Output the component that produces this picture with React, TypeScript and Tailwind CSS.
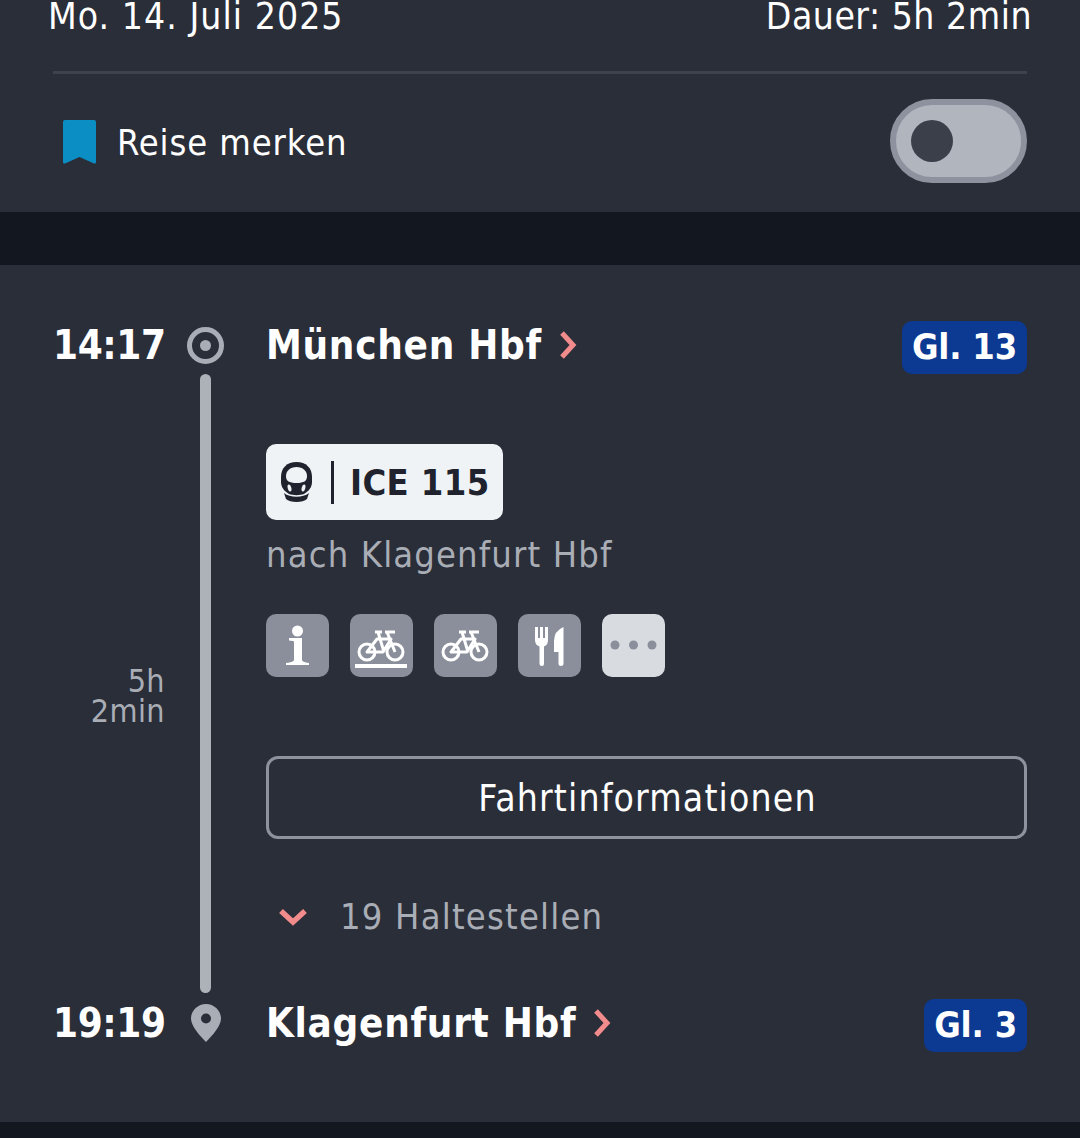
import React from "react";

function Bike() {
  return (
    <g fill="none" stroke="#fff" strokeWidth={3} strokeLinejoin="round">
      <circle cx={17} cy={38} r={8} />
      <circle cx={45} cy={38} r={8} />
      <path d="M17 38 L27 25 L41 25 L33 38 Z M25 18 H32 M28 18 L34 38 M35 18 H37 L45 38" />
      <path d="M38 18 H45" />
    </g>
  );
}

function Tile({ children, light }: { children: React.ReactNode; light?: boolean }) {
  return (
    <div className={`w-[63px] h-[63px] rounded-[10px] ${light ? "bg-[#d8dce1]" : "bg-[#8b8f9b]"}`}>
      <svg width="63" height="63" viewBox="0 0 63 63">{children}</svg>
    </div>
  );
}

function Stop({ time, name, track, icon }: { time: string; name: string; track: string; icon: React.ReactNode }) {
  return (
    <div className="flex h-[53px] pl-[53px] pr-[53px]">
      <div className="flex items-center h-[48px]">
        <div className="w-[113px] text-[40px] leading-none font-bold tracking-[-0.4px] text-white">{time}</div>
        <div className="w-[37px] ml-[21px] mr-[42px] flex justify-center">{icon}</div>
        <div className="text-[40px] leading-none font-bold tracking-[0.7px] text-white">{name}</div>
        <svg width="20" height="30" viewBox="0 0 20 30" className="ml-[17px]">
          <path d="M3 3 L14 15 L3 27" fill="none" stroke="#f28b8b" strokeWidth={5} />
        </svg>
      </div>
      <div className="ml-auto h-[53px] px-[10px] pb-[2px] rounded-[10px] bg-[#0c3992] text-white text-[36px] font-bold tracking-[-0.2px] flex items-center leading-none">
        {track}
      </div>
    </div>
  );
}

export default function App() {
  return (
    <div className="h-[1138px] overflow-hidden bg-[#131820] font-['DejaVu_Sans_Condensed','DejaVu_Sans',sans-serif]">
      {/* Kopf */}
      <div className="h-[212px] bg-[#2a2e39] flex flex-col">
        <div className="flex justify-between px-[48px] h-[71px] text-white text-[37px] leading-[33px]">
          <span className="tracking-[1.05px]">Mo. 14. Juli 2025</span>
          <span className="tracking-[0.5px]">Dauer: 5h 2min</span>
        </div>
        <div className="mx-[53px] h-[3px] bg-[#3e424d]" />
        <div className="flex flex-1 items-center pl-[63px] pr-[53px]">
          <svg width="33" height="44" viewBox="0 0 33 44" className="mr-[21px] mb-[2px]">
            <path d="M2 0 H31 A2 2 0 0 1 33 2 V42 Q33 44 31 43.4 L16.500 37 L2 43.400 Q0 44 0 42 V2 A2 2 0 0 1 2 0 Z" fill="#0b8ec4" />
          </svg>
          <span className="text-[36px] leading-none tracking-[0.9px] text-white">Reise merken</span>
          <div className="ml-auto mb-[4px] w-[137px] h-[84px] rounded-full border-[6px] border-[#8d929e] bg-[#b1b5bd] flex items-center pl-[15px]">
            <div className="w-[42px] h-[42px] rounded-full bg-[#3b3f4a]" />
          </div>
        </div>
      </div>

      {/* Verbindung */}
      <div className="mt-[53px] h-[857px] bg-[#2a2e39] pt-[56px]">
        <Stop
          time="14:17"
          name="München Hbf"
          track="Gl. 13"
          icon={
            <svg width="37" height="37" viewBox="0 0 37 37">
              <circle cx={18.5} cy={18.500} r={16} fill="none" stroke="#a9adb5" strokeWidth={5} />
              <circle cx={18.5} cy={18.500} r={5.500} fill="#a9adb5" />
            </svg>
          }
        />

        <div className="flex h-[625px] pr-[53px]">
          <div className="w-[165px] shrink-0 flex items-center justify-end pt-[18px] text-right text-[#a9adb5] text-[32px] tracking-[0.4px] leading-[30px]">
            <div>
              5h
              <br />
              2min
            </div>
          </div>
          <div className="w-[11px] ml-[35px] mb-[6px] rounded-full bg-[#adb1b8] shrink-0" />
          <div className="ml-[55px] flex-1 pt-[70px]">
            <div className="w-[237px] h-[76px] rounded-[10px] bg-[#eff3f6] flex items-center pl-[15px]">
              <svg width="31" height="41" viewBox="0 0 31 41">
                <path
                  d="M15.500 0 C25 0 31 6 31 15 V20 C31 25 28 29 23 32 C19 33.500 12 33.500 8 32 C3 29 0 25 0 20 V15 C0 6 6 0 15.500 0 Z"
                  fill="#20232d"
                />
                <path d="M15.500 5 C22 5 26 9 26 14 C26 19 23 21 15.500 21 C8 21 5 19 5 14 C5 9 9 5 15.500 5 Z" fill="#eff3f6" />
                <ellipse cx={8.500} cy={26} rx={1.800} ry={3.500} fill="#eff3f6" transform="rotate(-15 8.500 26)" />
                <ellipse cx={22.500} cy={26} rx={1.800} ry={3.500} fill="#eff3f6" transform="rotate(15 22.500 26)" />
                <path d="M3 31 C9 36 22 36 28 31 L26 37 C22 41 9 41 5 37 Z" fill="#20232d" />
              </svg>
              <div className="w-[3px] h-[43px] bg-[#20232d] ml-[19px] mr-[16px]" />
              <span className="text-[36px] leading-none font-bold tracking-[0.4px] text-[#20232d] pt-[2px]">ICE 115</span>
            </div>
            <div className="mt-[15px] text-[36px] leading-[40px] tracking-[1.15px] text-[#a9adb5]">nach Klagenfurt Hbf</div>
            <div className="mt-[39px] flex gap-[21px]">
              <Tile>
                <circle cx={31.500} cy={17} r={5.500} fill="#fff" />
                <path d="M23 24 H36 V46 Q36 48 43 49 V51 H20 V49 Q28 48 28 46 V28 Q28 26.500 23 26.500 Z" fill="#fff" />
              </Tile>
              <Tile>
                <Bike />
                <rect x={5} y={50} width={52} height={4} fill="#fff" />
              </Tile>
              <Tile>
                <Bike />
              </Tile>
              <Tile>
                <path d="M17 13 H20 V24 H22 V13 H25 V24 H27 V13 H30 V26 Q30 31 26 32.500 L26 50 Q26 52 24 52 Q21.500 52 21.500 50 L21.500 32.500 Q17 31 17 26 Z" fill="#fff" />
                <path d="M45.500 13 V50 Q45.500 52 43 52 Q40.500 52 40.500 50 V38 H36 V27 Q36 17 45.500 13 Z" fill="#fff" />
              </Tile>
              <Tile light>
                <circle cx={13} cy={31} r={4.500} fill="#8b8f9b" />
                <circle cx={31.500} cy={31} r={4.500} fill="#8b8f9b" />
                <circle cx={50} cy={31} r={4.500} fill="#8b8f9b" />
              </Tile>
            </div>
            <button className="mt-[79px] w-full h-[83px] pt-[2px] pl-[2px] rounded-[12px] border-[3px] border-[#8d929e] text-white text-[37px] tracking-[1.15px] leading-none">
              Fahrtinformationen
            </button>
            <div className="mt-[60px] flex items-center">
              <svg width="30" height="18" viewBox="0 0 30 18" className="ml-[12px]">
                <path d="M3 3 L15 14 L27 3" fill="none" stroke="#f28b8b" strokeWidth={5.500} />
              </svg>
              <span className="ml-[32px] text-[36px] leading-none tracking-[1.2px] text-[#a9adb5]">19 Haltestellen</span>
            </div>
          </div>
        </div>

        <Stop
          time="19:19"
          name="Klagenfurt Hbf"
          track="Gl. 3"
          icon={
            <svg width="30" height="38" viewBox="0 0 30 38">
              <path
                fillRule="evenodd"
                d="M15 0 C23 0 30 6.500 30 14.500 C30 22 21 32 15 38 C9 32 0 22 0 14.500 C0 6.500 7 0 15 0 Z M15 9.500 A5 5 0 1 0 15 19.500 A5 5 0 1 0 15 9.500 Z"
                fill="#a9adb5"
              />
            </svg>
          }
        />
      </div>
    </div>
  );
}
